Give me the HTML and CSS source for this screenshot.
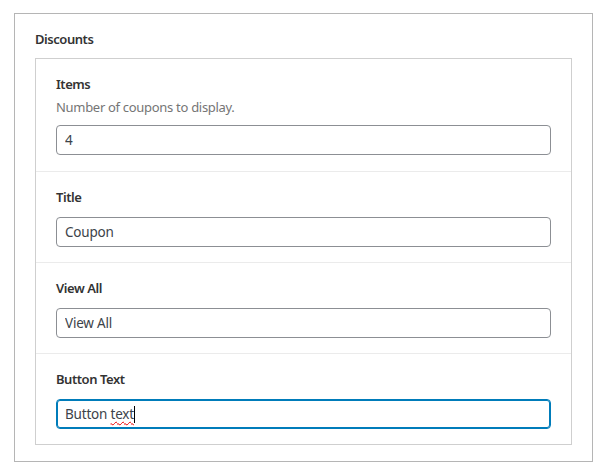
FILE: index.html
```html
<!DOCTYPE html>
<html lang="en">
<head>
<meta charset="utf-8">
<title>Discounts</title>
<link rel="stylesheet" href="styles.css">
</head>
<body>
<div class="panel">
  <div class="panel-title">Discounts</div>
  <div class="fields">
    <div class="field field-first">
      <label class="label" for="f-items">Items</label>
      <p class="help">Number of coupons to display.</p>
      <input class="input" id="f-items" type="text" value="4">
    </div>
    <div class="field">
      <label class="label" for="f-title">Title</label>
      <input class="input" id="f-title" type="text" value="Coupon">
    </div>
    <div class="field">
      <label class="label" for="f-view">View All</label>
      <input class="input" id="f-view" type="text" value="View All">
    </div>
    <div class="field">
      <div class="label">Button Text</div>
      <div class="input focused">Button <span class="misspelled">text</span><span class="caret"></span></div>
    </div>
  </div>
</div>
</body>
</html>
```
FILE: styles.css
```css
* { box-sizing: border-box; }
html, body { background: #fff; }
body {
  margin: 0;
  padding: 13px 15px 0 14px;
  font-family: "Noto Sans", "Open Sans", sans-serif;
  font-size: 13px;
  letter-spacing: -0.3px;
  color: #1e1e1e;
}
.panel {
  border: 1px solid #b5b5b5;
  padding: 15px 20px 16px 20px;
  height: 449px;
}
.panel-title {
  font-weight: 600;
  letter-spacing: -0.45px;
  line-height: 20px;
  color: #333;
  margin-bottom: 9px;
}
.fields {
  border: 1px solid #cfcfcf;
}
.field {
  display: flex;
  flex-direction: column;
  padding: 15px 20px 15px 20px;
  border-top: 1px solid #ebebeb;
}
.field:first-child { border-top: 0; }
.field-first { padding-bottom: 16px; }
.label {
  display: block;
  font-weight: 600;
  letter-spacing: -0.45px;
  line-height: 20px;
  color: #333;
  margin-bottom: 10px;
}
.help {
  margin: -7px 0 8px;
  line-height: 20px;
  color: #757575;
}
.input {
  display: flex;
  align-items: center;
  width: 100%;
  height: 30px;
  margin: 0;
  padding: 0 8px;
  border: 1px solid #8c8f94;
  border-radius: 4px;
  font-family: inherit;
  font-size: 13.5px;
  letter-spacing: -0.2px;
  color: #3c434a;
  background: #fff;
  outline: none;
}
.input.focused {
  border-color: #007cba;
  box-shadow: inset 0 0 0 1px #007cba;
  white-space: pre;
}
.misspelled {
  text-decoration: underline wavy #e00;
  text-decoration-thickness: 1px;
  text-underline-offset: 2px;
}
.caret {
  display: inline-block;
  width: 1px;
  height: 17px;
  background: #000;
}
```
